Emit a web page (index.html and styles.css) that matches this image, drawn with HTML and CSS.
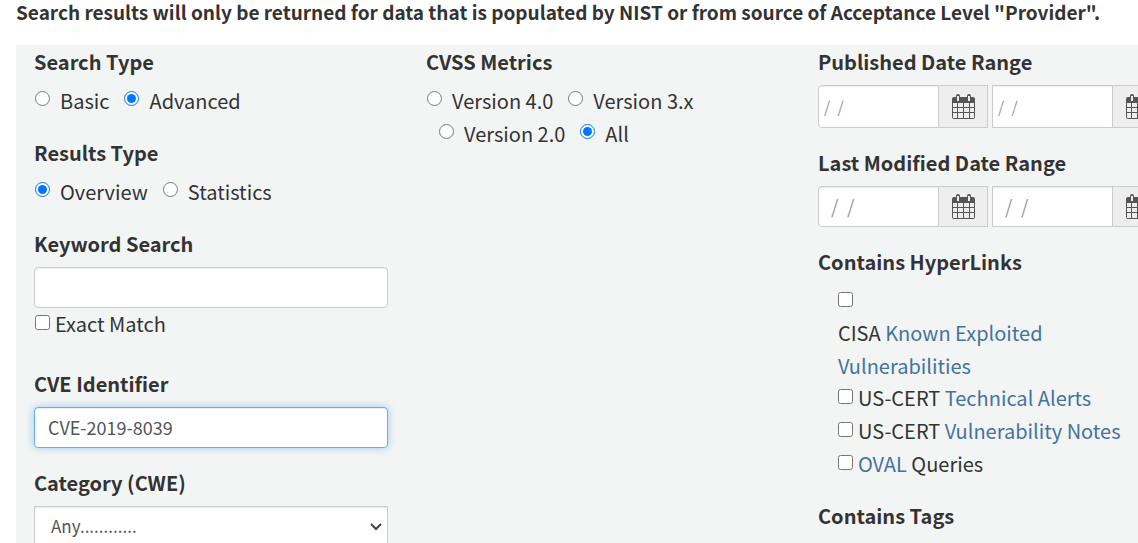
FILE: index.html
```html
<!DOCTYPE html>
<html lang="en">
<head>
  <meta charset="UTF-8" />
  <meta name="viewport" content="width=device-width, initial-scale=1.0" />
  <title>Search Vulnerability Database</title>
  <link rel="stylesheet" href="styles.css">
</head>
<body>
  <svg class="sprite" width="0" height="0" aria-hidden="true">
    <symbol id="calendar" viewBox="0 0 23 25">
      <path fill="#555" fill-rule="evenodd" d="M2 3h2V2q0-2 2-2T8 2v1h7V2q0-2 2-2T19 2v1h2q2 0 2 2v18q0 2-2 2H2q-2 0-2-2V5q0-2 2-2zM5 2v5h2V2zM16 2v5h2V2zM1 9v4h4V9zM6 9v4h5V9zM12 9v4h5V9zM18 9v4h4V9zM1 14v4h4v-4zM6 14v4h5v-4zM12 14v4h5v-4zM18 14v4h4v-4zM1 19v5h4v-5zM6 19v5h5v-5zM12 19v5h5v-5zM18 19v5h4v-5z"/>
    </symbol>
  </svg>

  <p class="notice">Search results will only be returned for data that is populated by NIST or from source of Acceptance Level "Provider".</p>

  <form class="search-form">
    <div class="column">
      <fieldset>
        <legend>Search Type</legend>
        <div class="options">
          <label><input type="radio" name="searchType" /> Basic</label>
          <label><input type="radio" name="searchType" checked /> Advanced</label>
        </div>
      </fieldset>
      <fieldset>
        <legend>Results Type</legend>
        <div class="options">
          <label><input type="radio" name="resultsType" checked /> Overview</label>
          <label><input type="radio" name="resultsType" /> Statistics</label>
        </div>
      </fieldset>
      <div class="form-group keyword-group">
        <label class="heading" for="keyword">Keyword Search</label>
        <input type="text" class="form-control" id="keyword" />
        <label class="check"><input type="checkbox" /> Exact Match</label>
      </div>
      <div class="form-group">
        <label class="heading" for="cveId">CVE Identifier</label>
        <input type="text" class="form-control" id="cveId" value="CVE-2019-8039" autofocus />
      </div>
      <div class="form-group">
        <label class="heading" for="category">Category (CWE)</label>
        <select class="form-control" id="category">
          <option>Any............</option>
        </select>
      </div>
    </div>

    <div class="column">
      <fieldset>
        <legend>CVSS Metrics</legend>
        <div class="options">
          <label><input type="radio" name="cvss" /> Version 4.0</label>
          <label><input type="radio" name="cvss" /> Version 3.x</label>
        </div>
        <div class="options indent">
          <label><input type="radio" name="cvss" /> Version 2.0</label>
          <label><input type="radio" name="cvss" checked /> All</label>
        </div>
      </fieldset>
    </div>

    <div class="column">
      <fieldset>
        <legend>Published Date Range</legend>
        <div class="date-range published">
          <input type="text" placeholder="/&nbsp; /" aria-label="Published start date" />
          <button type="button" aria-label="Pick published start date"><svg><use href="#calendar" /></svg></button>
          <input type="text" placeholder="/&nbsp; /" aria-label="Published end date" />
          <button type="button" aria-label="Pick published end date"><svg><use href="#calendar" /></svg></button>
        </div>
      </fieldset>
      <fieldset>
        <legend>Last Modified Date Range</legend>
        <div class="date-range modified">
          <input type="text" placeholder="/&nbsp; /" aria-label="Modified start date" />
          <button type="button" aria-label="Pick modified start date"><svg><use href="#calendar" /></svg></button>
          <input type="text" placeholder="/&nbsp; /" aria-label="Modified end date" />
          <button type="button" aria-label="Pick modified end date"><svg><use href="#calendar" /></svg></button>
        </div>
      </fieldset>
      <fieldset>
        <legend>Contains HyperLinks</legend>
        <div class="link-list">
          <div class="stacked"><input type="checkbox" id="kev" /><label for="kev">CISA <a href="#">Known Exploited Vulnerabilities</a></label></div>
          <div class="check"><input type="checkbox" id="certAlerts" /><label for="certAlerts">US-CERT <a href="#">Technical Alerts</a></label></div>
          <div class="check"><input type="checkbox" id="certNotes" /><label for="certNotes">US-CERT <a href="#">Vulnerability Notes</a></label></div>
          <div class="check"><input type="checkbox" id="oval" /><label for="oval"><a href="#">OVAL</a> Queries</label></div>
        </div>
      </fieldset>
      <fieldset>
        <legend>Contains Tags</legend>
      </fieldset>
    </div>
  </form>
</body>
</html>
```
FILE: styles.css
```css
* {
  box-sizing: border-box;
}
body {
  margin: 0;
  padding-left: 16px;
  overflow: hidden;
  font-family: "Noto Sans CJK SC", "Open Sans", sans-serif;
  font-size: 20px;
  line-height: 33px;
  color: #333;
  background: #fff;
}
.sprite {
  display: block;
}
.notice {
  margin: 0 0 22px;
  font-size: 19px;
  line-height: 23px;
  font-weight: bold;
  white-space: nowrap;
}
.search-form {
  display: grid;
  grid-template-columns: repeat(3, minmax(354px, 1fr));
  gap: 38px;
  padding-left: 18px;
  background: #f3f5f5;
}
fieldset, .form-group {
  margin: 0 0 18px;
  padding: 0;
  border: 0;
  min-width: 0;
}
.keyword-group {
  margin-bottom: 26px;
}
legend, .heading {
  display: block;
  padding: 0;
  height: 40px;
  font-weight: bold;
}
.options {
  display: flex;
  gap: 14px;
}
.options label, .check {
  display: flex;
  height: 33px;
  line-height: 31px;
}
.options.indent {
  padding-left: 12px;
}
input[type="radio"], input[type="checkbox"] {
  flex: none;
  width: 15px;
  height: 15px;
  margin: 6px 10px 0 1px;
  accent-color: #0075ff;
}
input[type="radio"] {
  background: #e8e9e9;
}
input[type="checkbox"] {
  margin: 7px 5px 0 1px;
}
.form-control {
  display: block;
  width: 100%;
  height: 41px;
  padding: 0 13px 2px;
  border: 1px solid #ccc;
  border-radius: 4px;
  font-family: inherit;
  font-size: 18px;
  color: #555;
  background-color: #fff;
  box-shadow: inset 0 1px 1px rgba(0,0,0,0.075);
}
.form-control:focus {
  border-color: #66afe9;
  outline: 0;
  box-shadow: inset 0 1px 1px rgba(0,0,0,0.075), 0 0 8px rgba(102,175,233,0.6);
}
select.form-control {
  appearance: none;
  padding: 0 24px 2px 16px;
  border-radius: 0;
  font-size: 17px;
  background-image: url("data:image/svg+xml,%3Csvg xmlns='http://www.w3.org/2000/svg' width='12' height='8'%3E%3Cpath d='M1 1l5 5 5-5' fill='none' stroke='%23444' stroke-width='2'/%3E%3C/svg%3E");
  background-repeat: no-repeat;
  background-position: right 5px center;
}
.date-range {
  display: flex;
  height: 41px;
}
.date-range.published {
  height: 43px;
}
.date-range input {
  width: 121px;
  padding: 0 5px 2px;
  border: 1px solid #ccc;
  font-family: inherit;
  font-size: 16px;
  color: #555;
  background: #fff;
  box-shadow: inset 0 1px 1px rgba(0,0,0,0.075);
}
.date-range input:first-child {
  border-radius: 4px 0 0 4px;
}
.date-range.modified input {
  padding: 0 12px 2px;
  font-size: 19px;
}
.date-range input::placeholder {
  color: #999;
}
.date-range button {
  display: flex;
  align-items: center;
  justify-content: center;
  width: 49px;
  margin-right: 4px;
  padding: 0;
  border: 1px solid #ccc;
  border-left: 0;
  background: #eee;
}
.date-range svg {
  width: 23px;
  height: 25px;
}
.link-list {
  width: 320px;
  padding-left: 19px;
}
.stacked input {
  display: block;
}
.stacked label {
  display: block;
  padding: 9px 0 0 1px;
}
a {
  color: #44739e;
  text-decoration: none;
}
```
